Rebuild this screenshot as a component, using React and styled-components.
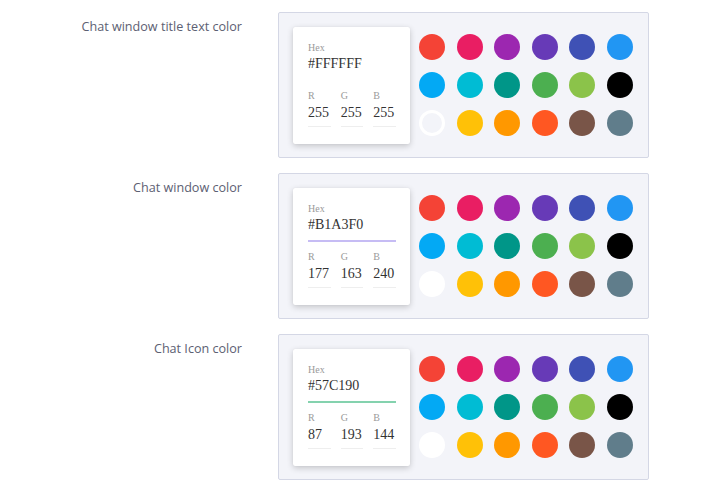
import React from "react";
import styled, { createGlobalStyle, css } from "styled-components";

const GlobalStyle = createGlobalStyle`
  body {
    margin: 0;
    background: #ffffff;
    font-family: "Open Sans", "Liberation Sans", sans-serif;
  }
`;

const SWATCHES = [
  "#F44336", "#E91E63", "#9C27B0", "#673AB7", "#3F51B5", "#2196F3",
  "#03A9F4", "#00BCD4", "#009688", "#4CAF50", "#8BC34A", "#000000",
  "#FFFFFF", "#FFC107", "#FF9800", "#FF5722", "#795548", "#607D8B",
];

const SETTINGS = [
  { label: "Chat window title text color", hex: "#FFFFFF" },
  { label: "Chat window color", hex: "#B1A3F0" },
  { label: "Chat Icon color", hex: "#57C190" },
];

const Page = styled.div`
  display: flex;
  flex-direction: column;
  gap: 15px;
  padding-top: 12px;
`;

const Row = styled.div`
  display: flex;
  align-items: flex-start;
  gap: 36px;
`;

const Label = styled.div`
  width: 242px;
  padding-top: 6px;
  text-align: right;
  font-size: 12.6px;
  line-height: 18px;
  color: #5c6072;
`;

const Panel = styled.div`
  box-sizing: border-box;
  width: 371px;
  height: 146px;
  padding: 0 14px;
  display: flex;
  align-items: center;
  background: #f3f4f9;
  border: 1px solid #d4d7e5;
  border-radius: 2px;
`;

const Card = styled.div`
  box-sizing: border-box;
  width: 117px;
  height: 117px;
  padding: 15px 14px 0 15px;
  background: #ffffff;
  border-radius: 2px;
  box-shadow: 0 2px 6px rgba(0, 0, 0, 0.2), 0 0 1px rgba(0, 0, 0, 0.1);
  font-family: "Liberation Serif", "DejaVu Serif", serif;
`;

const FieldLabel = styled.div`
  font-size: 10px;
  line-height: 12px;
  color: #9a9a9a;
`;

const HexField = styled.div`
  margin-top: 1px;
  padding-bottom: 6px;
  font-size: 14px;
  line-height: 18px;
  color: #333333;
  border-bottom: 2px solid ${({ $color }) => $color};
`;

const RgbRow = styled.div`
  display: grid;
  grid-template-columns: repeat(3, 1fr);
  column-gap: 10px;
  margin-top: 9px;
`;

const RgbValue = styled.div`
  margin-top: 2px;
  padding-bottom: 4px;
  font-size: 14px;
  line-height: 18px;
  color: #333333;
  border-bottom: 1px solid #eeeeee;
`;

const Swatches = styled.div`
  display: grid;
  grid-template-columns: repeat(6, 26px);
  gap: 12px 11.6px;
  margin-left: 9px;
`;

const Swatch = styled.div`
  box-sizing: border-box;
  width: 26px;
  height: 26px;
  border-radius: 50%;
  background: ${({ $color }) => $color};
  ${({ $active }) =>
    $active &&
    css`
      background: transparent;
      border: 3px solid #ffffff;
    `}
`;

function toRgb(hex) {
  const n = parseInt(hex.slice(1), 16);
  return [(n >> 16) & 255, (n >> 8) & 255, n & 255];
}

function ColorSetting({ label, hex }) {
  const [r, g, b] = toRgb(hex);
  const underline = hex.toUpperCase() === "#FFFFFF" ? "#ffffff" : hex + "bb";
  return (
    <Row>
      <Label>{label}</Label>
      <Panel>
        <Card>
          <FieldLabel>Hex</FieldLabel>
          <HexField $color={underline}>{hex}</HexField>
          <RgbRow>
            {[["R", r], ["G", g], ["B", b]].map(([k, v]) => (
              <div key={k}>
                <FieldLabel>{k}</FieldLabel>
                <RgbValue>{v}</RgbValue>
              </div>
            ))}
          </RgbRow>
        </Card>
        <Swatches>
          {SWATCHES.map((c) => (
            <Swatch key={c} $color={c} $active={c === hex.toUpperCase()} />
          ))}
        </Swatches>
      </Panel>
    </Row>
  );
}

export default function App() {
  return (
    <>
      <GlobalStyle />
      <Page>
        {SETTINGS.map((s) => (
          <ColorSetting key={s.label} {...s} />
        ))}
      </Page>
    </>
  );
}
